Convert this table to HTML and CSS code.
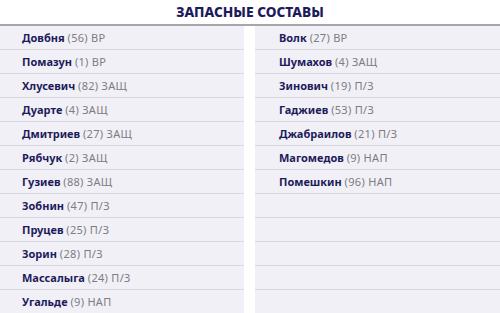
FILE: index.html
```html
<!DOCTYPE html>
<html lang="ru">
<head>
<meta charset="utf-8">
<link rel="stylesheet" href="styles.css">
</head>
<body>
<section class="subs">
  <h2 class="subs-title">ЗАПАСНЫЕ СОСТАВЫ</h2>
  <div class="subs-grid">
    <ul class="team team-left">
      <li class="row"><b class="name">Довбня</b> <span class="info">(56) ВР</span></li>
      <li class="row"><b class="name">Помазун</b> <span class="info">(1) ВР</span></li>
      <li class="row"><b class="name">Хлусевич</b> <span class="info">(82) ЗАЩ</span></li>
      <li class="row"><b class="name">Дуарте</b> <span class="info">(4) ЗАЩ</span></li>
      <li class="row"><b class="name">Дмитриев</b> <span class="info">(27) ЗАЩ</span></li>
      <li class="row"><b class="name">Рябчук</b> <span class="info">(2) ЗАЩ</span></li>
      <li class="row"><b class="name">Гузиев</b> <span class="info">(88) ЗАЩ</span></li>
      <li class="row"><b class="name">Зобнин</b> <span class="info">(47) П/З</span></li>
      <li class="row"><b class="name">Пруцев</b> <span class="info">(25) П/З</span></li>
      <li class="row"><b class="name">Зорин</b> <span class="info">(28) П/З</span></li>
      <li class="row"><b class="name">Массалыга</b> <span class="info">(24) П/З</span></li>
      <li class="row"><b class="name">Угальде</b> <span class="info">(9) НАП</span></li>
    </ul>
    <ul class="team team-right">
      <li class="row"><b class="name">Волк</b> <span class="info">(27) ВР</span></li>
      <li class="row"><b class="name">Шумахов</b> <span class="info">(4) ЗАЩ</span></li>
      <li class="row"><b class="name">Зинович</b> <span class="info">(19) П/З</span></li>
      <li class="row"><b class="name">Гаджиев</b> <span class="info">(53) П/З</span></li>
      <li class="row"><b class="name">Джабраилов</b> <span class="info">(21) П/З</span></li>
      <li class="row"><b class="name">Магомедов</b> <span class="info">(9) НАП</span></li>
      <li class="row"><b class="name">Помешкин</b> <span class="info">(96) НАП</span></li>
      <li class="row"></li>
      <li class="row"></li>
      <li class="row"></li>
      <li class="row"></li>
      <li class="row"></li>
    </ul>
  </div>
</section>
</body>
</html>
```
FILE: styles.css
```css
* { box-sizing: border-box; }
html, body { margin: 0; padding: 0; background: #ffffff; }
body { font-family: "Noto Sans", "DejaVu Sans", sans-serif; }
.subs { width: 500px; }
.subs-title {
  margin: 0;
  height: 24px;
  padding-top: 3px;
  text-align: center;
  font-size: 13.7px;
  font-weight: 800;
  line-height: 17px;
  color: #1d1b5b;
}
.subs-grid {
  display: grid;
  grid-template-columns: 244px 245px;
  column-gap: 11px;
  border-top: 2px solid #a6a6ad;
}
.team { list-style: none; margin: 0; padding: 0; }
.row {
  height: 24px;
  background: #f1f0f6;
  border-bottom: 1px solid #d9d8df;
  font-size: 11px;
  line-height: 23px;
  white-space: nowrap;
}
.team-left .row { padding-left: 22px; }
.team-right .row { padding-left: 24px; }
.name { font-weight: 700; color: #1d1b5b; }
.info { color: #7c7c82; letter-spacing: 0.3px; }
```
